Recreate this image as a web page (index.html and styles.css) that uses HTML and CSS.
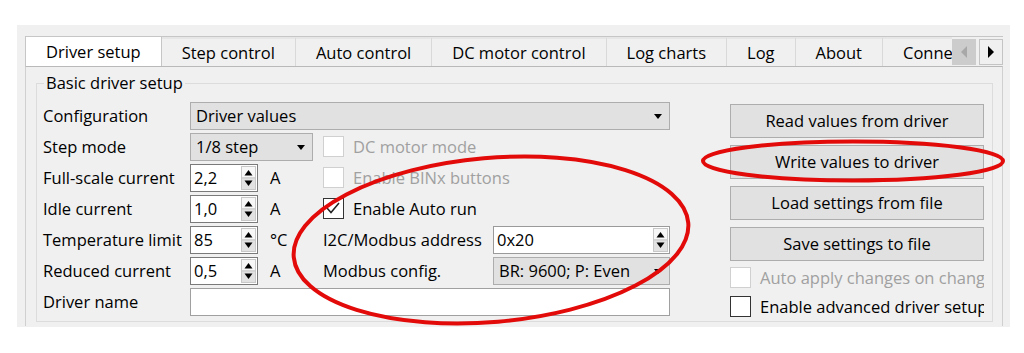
FILE: index.html
```html
<!DOCTYPE html>
<html>
<head>
<meta charset="utf-8">
<link rel="stylesheet" href="styles.css">
</head>
<body>
<div class="window">
  <div class="tabbar">
    <div class="tablist">
      <div class="tab active">Driver setup</div>
      <div class="tab">Step control</div>
      <div class="tab">Auto control</div>
      <div class="tab">DC motor control</div>
      <div class="tab">Log charts</div>
      <div class="tab">Log</div>
      <div class="tab">About</div>
      <div class="tab">Connection</div>
    </div>
    <div class="scroller">
      <div class="sbtn disabled"><svg width="10" height="14" viewBox="0 0 10 14"><polygon points="8,1 2,7 8,13" /></svg></div>
      <div class="sbtn"><svg width="10" height="14" viewBox="0 0 10 14"><polygon points="2,1 8,7 2,13" /></svg></div>
    </div>
  </div>
  <div class="pane">
    <fieldset class="group">
      <legend>Basic driver setup</legend>
      <div class="group-body">
        <div class="form">
          <div class="lbl">Configuration</div>
          <div class="combo span3"><span>Driver values</span><i class="arrow"></i></div>

          <div class="lbl">Step mode</div>
          <div class="combo small"><span>1/8 step</span><i class="arrow"></i></div>
          <div class="check disabled span2"><span class="box"></span><span>DC motor mode</span></div>

          <div class="lbl">Full-scale current</div>
          <div class="field"><div class="spin"><span>2,2</span><svg class="spinbtn" width="15" height="24" viewBox="0 0 15 24"><rect class="up" x="0.5" y="0.5" width="14" height="11.5"/><rect class="dn" x="0.5" y="12" width="14" height="11.5"/><polygon points="3.5,9.5 7.5,4 11.5,9.5"/><polygon points="3.5,14.5 7.5,20 11.5,14.5"/></svg></div><span class="unit">A</span></div>
          <div class="check disabled span2"><span class="box"></span><span>Enable BINx buttons</span></div>

          <div class="lbl">Idle current</div>
          <div class="field"><div class="spin"><span>1,0</span><svg class="spinbtn" width="15" height="24" viewBox="0 0 15 24"><rect class="up" x="0.5" y="0.5" width="14" height="11.5"/><rect class="dn" x="0.5" y="12" width="14" height="11.5"/><polygon points="3.5,9.5 7.5,4 11.5,9.5"/><polygon points="3.5,14.5 7.5,20 11.5,14.5"/></svg></div><span class="unit">A</span></div>
          <div class="check span2"><span class="box"><svg width="20" height="20" viewBox="0 0 20 20"><polyline points="4,10 8,14.5 16,5" /></svg></span><span>Enable Auto run</span></div>

          <div class="lbl">Temperature limit</div>
          <div class="field"><div class="spin"><span>85</span><svg class="spinbtn" width="15" height="24" viewBox="0 0 15 24"><rect class="up" x="0.5" y="0.5" width="14" height="11.5"/><rect class="dn" x="0.5" y="12" width="14" height="11.5"/><polygon points="3.5,9.5 7.5,4 11.5,9.5"/><polygon points="3.5,14.5 7.5,20 11.5,14.5"/></svg></div><span class="unit">°C</span></div>
          <div class="lbl2">I2C/Modbus address</div>
          <div class="spin wide"><span>0x20</span><svg class="spinbtn" width="15" height="24" viewBox="0 0 15 24"><rect class="up" x="0.5" y="0.5" width="14" height="11.5"/><rect class="dn" x="0.5" y="12" width="14" height="11.5"/><polygon points="3.5,9.5 7.5,4 11.5,9.5"/><polygon points="3.5,14.5 7.5,20 11.5,14.5"/></svg></div>

          <div class="lbl">Reduced current</div>
          <div class="field"><div class="spin"><span>0,5</span><svg class="spinbtn" width="15" height="24" viewBox="0 0 15 24"><rect class="up" x="0.5" y="0.5" width="14" height="11.5"/><rect class="dn" x="0.5" y="12" width="14" height="11.5"/><polygon points="3.5,9.5 7.5,4 11.5,9.5"/><polygon points="3.5,14.5 7.5,20 11.5,14.5"/></svg></div><span class="unit">A</span></div>
          <div class="lbl2">Modbus config.</div>
          <div class="combo"><span>BR: 9600; P: Even</span><i class="arrow"></i></div>

          <div class="lbl">Driver name</div>
          <div class="text span3"></div>
        </div>
        <div class="actions">
          <div class="btns">
            <div class="btn">Read values from driver</div>
            <div class="btn">Write values to driver</div>
            <div class="btn">Load settings from file</div>
            <div class="btn">Save settings to file</div>
          </div>
          <div class="opts">
            <div class="check disabled"><span class="box"></span><span>Auto apply changes on change</span></div>
            <div class="check"><span class="box"></span><span>Enable advanced driver setup</span></div>
          </div>
        </div>
      </div>
    </fieldset>
  </div>
</div>
<svg class="marks" width="1024" height="353" viewBox="0 0 1024 353">
  <ellipse cx="491" cy="240" rx="198" ry="82" transform="rotate(-5 491 240)" />
  <ellipse cx="853" cy="161" rx="150" ry="19.5" />
</svg>
</body>
</html>
```

FILE: styles.css
```css
* { box-sizing: border-box; }

body {
  margin: 0;
  width: 1024px;
  height: 353px;
  overflow: hidden;
  position: relative;
  background: #ffffff;
  color: #000000;
  font-family: "Open Sans", "Noto Sans", sans-serif;
  font-size: 16.5px;
  line-height: 20px;
}

.window {
  margin: 25px 0 0 17px;
  width: 993px;
  height: 302px;
  padding: 11px 7px 0 8px;
  background: #f0f0f0;
  overflow: hidden;
}

.tabbar {
  display: flex;
  height: 30px;
}

.tablist {
  display: flex;
  width: 928px;
  overflow: hidden;
  align-items: flex-start;
  border-top: 1px solid #c6c6c6;
}

.tab {
  flex: none;
  height: 29px;
  padding: 0 20px;
  white-space: nowrap;
  border-right: 1px solid #d9d9d9;
  border-top: 2px solid #e6e6e6;
  line-height: 27px;
}

.tab.active {
  position: relative;
  z-index: 1;
  height: 30px;
  background: #ffffff;
  border-top: none;
  border-left: 1px solid #c6c6c6;
  border-right: 1px solid #c6c6c6;
  line-height: 30px;
}

.scroller {
  display: flex;
  gap: 3px;
  padding-top: 2px;
  border-top: 1px solid #c6c6c6;
}

.sbtn {
  width: 24px;
  height: 26px;
  display: flex;
  align-items: center;
  justify-content: center;
  background: #f0f0f0;
  border: 1px solid #c4c4c4;
}

.sbtn polygon { fill: #000; }

.sbtn.disabled {
  background: #cccccc;
  border-color: #cccccc;
}

.sbtn.disabled polygon { fill: #a8a8a8; }

.pane {
  height: 260px;
  padding: 6px 9px 0 10px;
  border: 1px solid #d0d0d0;
  border-top-color: #b9b9b9;
  border-bottom: none;
}

.group {
  margin: 0;
  padding: 7px 6px 0 6px;
  border: 1px solid #dcdcdc;
  min-width: 0;
}

.group legend {
  margin-left: 1px;
  padding: 0 2px;
  line-height: 20px;
}

.group-body {
  display: flex;
  gap: 60px;
}

.form {
  width: 627px;
  display: grid;
  grid-template-columns: 147px 133px 170px 177px;
  grid-auto-rows: 31px;
  align-items: center;
}

.lbl, .lbl2 { white-space: nowrap; }

.span3 { grid-column: span 3; }
.span2 { grid-column: span 2; }

.combo {
  height: 28px;
  display: flex;
  align-items: center;
  justify-content: space-between;
  padding: 0 7px 0 5px;
  background: #e1e1e1;
  border: 1px solid #adadad;
  white-space: nowrap;
}

.combo.small { width: 123px; }

.arrow {
  width: 0;
  height: 0;
  border-left: 4.5px solid transparent;
  border-right: 4.5px solid transparent;
  border-top: 5px solid #000;
  margin-top: 1px;
}

.field {
  display: flex;
  align-items: center;
  gap: 12px;
}

.spin {
  width: 68px;
  height: 28px;
  display: flex;
  align-items: center;
  justify-content: space-between;
  padding: 0 1px 0 3px;
  background: #ffffff;
  border: 1px solid #7a7a7a;
}

.spin.wide { width: 177px; border-color: #9a9a9a; }

.spinbtn rect { stroke: #c8c8c8; stroke-width: 1; }
.spinbtn .up { fill: #f7f7f7; }
.spinbtn .dn { fill: #e2e2e2; }
.spinbtn polygon { fill: #000; }

.unit { white-space: nowrap; }

.text {
  height: 28px;
  background: #ffffff;
  border: 1px solid #a0a0a0;
}

.check {
  display: flex;
  align-items: center;
  gap: 9px;
  white-space: nowrap;
}

.box {
  flex: none;
  width: 21px;
  height: 21px;
  background: #ffffff;
  border: 1px solid #333333;
  display: flex;
}

.box svg { margin: -1px; }

.box polyline {
  fill: none;
  stroke: #222;
  stroke-width: 1.5;
}

.check.disabled { color: #a0a0a0; }
.check.disabled .box { border-color: #d0d0d0; }

.actions {
  width: 254px;
  overflow: hidden;
  padding-top: 4px;
  display: flex;
  flex-direction: column;
}

.btns {
  display: flex;
  flex-direction: column;
  gap: 7px;
}

.btn {
  height: 34px;
  display: flex;
  align-items: center;
  justify-content: center;
  background: #e1e1e1;
  border: 1px solid #adadad;
  white-space: nowrap;
}

.opts {
  margin-top: 2px;
  display: flex;
  flex-direction: column;
}

.opts .check { height: 29px; }

.marks {
  position: absolute;
  left: 0;
  top: 0;
  pointer-events: none;
}

.marks ellipse {
  fill: none;
  stroke: #e30a0a;
  stroke-width: 4;
}
```
